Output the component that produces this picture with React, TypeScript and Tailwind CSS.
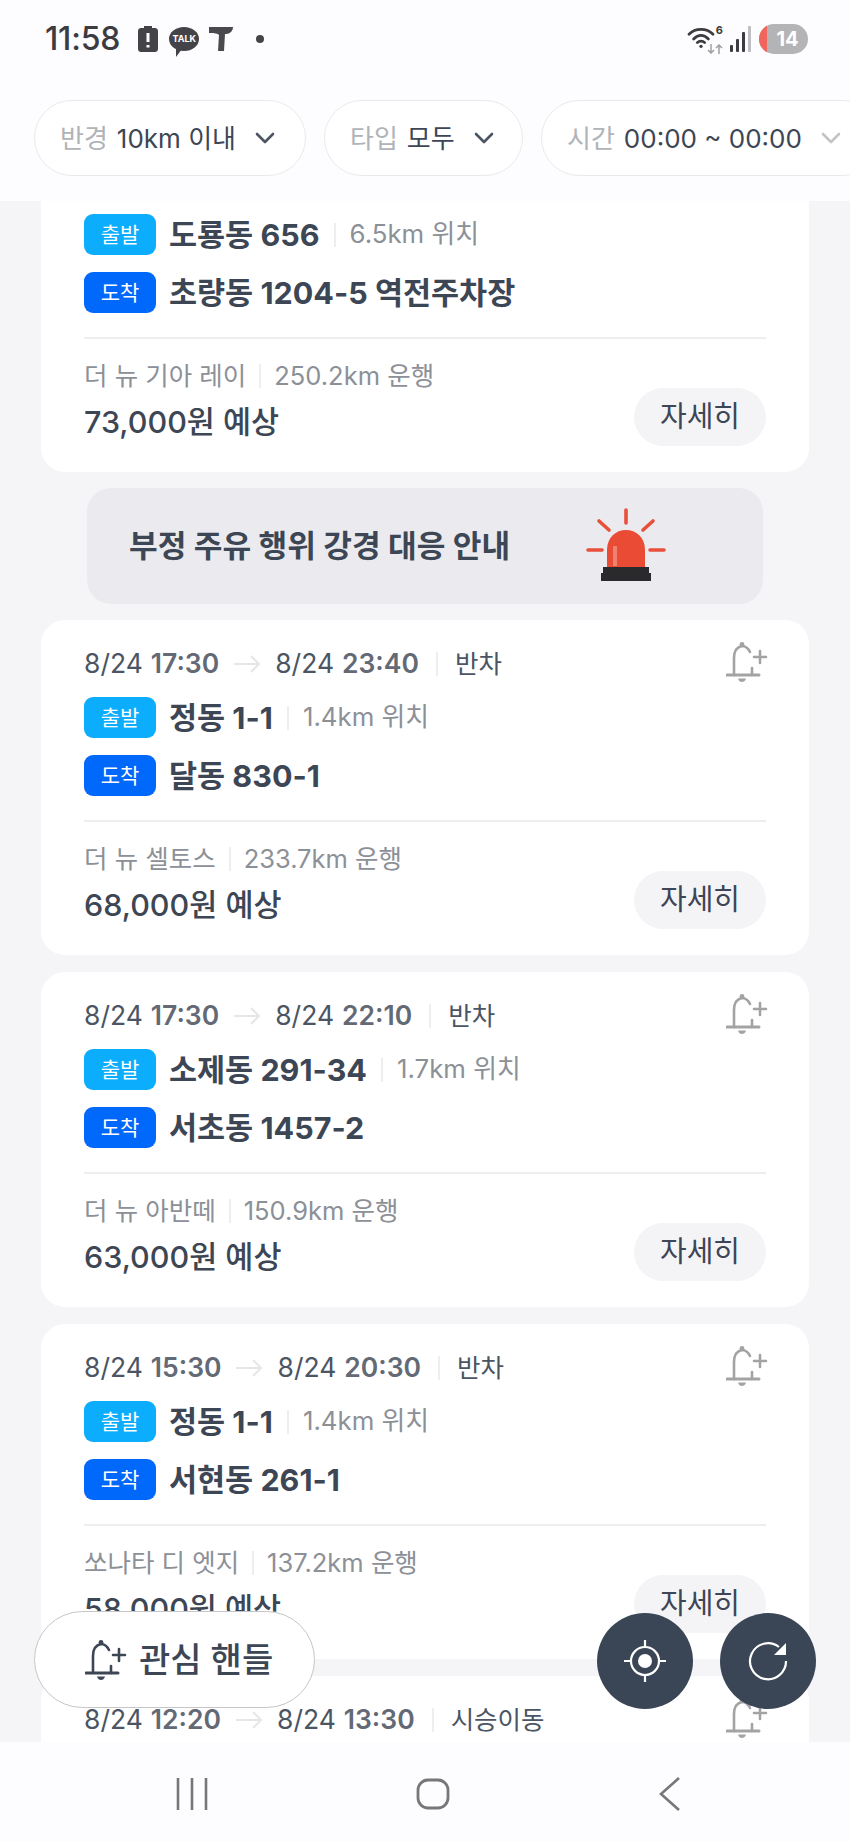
import React from "react";

const FONT = { fontFamily: '"Inter","Noto Sans CJK KR",sans-serif' };

function BellPlus({ color = "#a3a3a6", className = "" }: { color?: string; className?: string }) {
  return (
    <svg viewBox="0 0 42 42" className={className} fill="none" stroke={color} strokeWidth="2.6" strokeLinecap="round">
      <path d="M1 34H33" strokeWidth="3" />
      <path d="M8 34V17C8 10 11 6 16 5C19 5 22 7 24 11" />
      <path d="M26 27V34" />
      <circle cx="16" cy="3.5" r="2.4" fill={color} stroke="none" />
      <path d="M12 37.5H20C19.5 40 17.5 41 16 41C14.5 41 12.5 40 12 37.5Z" fill={color} stroke="none" />
      <path d="M34 10V22M28 16H40" />
    </svg>
  );
}

function Chevron({ className = "", color = "#4b5563" }: { className?: string; color?: string }) {
  return (
    <svg viewBox="0 0 20 14" className={className} fill="none" stroke={color} strokeWidth="2.6" strokeLinecap="round" strokeLinejoin="round">
      <path d="M2 3L10 11L18 3" />
    </svg>
  );
}

function Chip({ label, value, chevron, extra = "" }: { label: string; value: string; chevron?: string; extra?: string }) {
  return (
    <div className={`flex h-[76px] shrink-0 items-center rounded-full border border-[#eaeaec] bg-white pl-[25px] ${extra}`}>
      <span className="text-[26px] text-[#b0b3b8]">{label}</span>
      <span className="ml-[9px] text-[26px] text-[#3d4654]">{value}</span>
      <Chevron className="ml-[19px] h-[14px] w-[20px] shrink-0" color={chevron} />
    </div>
  );
}

function Divider({ className = "" }: { className?: string }) {
  return <span className={`mx-[13px] inline-block h-[24px] w-[2px] bg-[#eeeef0] ${className}`} />;
}

function Badge({ kind }: { kind: "출발" | "도착" }) {
  return (
    <span
      className={`mr-[13px] flex h-[41px] w-[72px] shrink-0 items-center justify-center rounded-[9px] text-[21px] text-white ${
        kind === "출발" ? "bg-[#0cadfd]" : "bg-[#0068fa]"
      }`}
    >
      {kind}
    </span>
  );
}

type CardProps = {
  times?: [string, string, string, string];
  kind?: string;
  from: string;
  fromDist: string;
  to: string;
  car: string;
  dist: string;
  price: string;
  clipped?: boolean;
};

function Card({ times, kind, from, fromDist, to, car, dist, price, clipped }: CardProps) {
  return (
    <section
      className={`relative mx-[41px] shrink-0 bg-white px-[43px] ${
        clipped ? "h-[271px] rounded-b-[24px] pt-[13px]" : "h-[335px] rounded-[24px] pt-[27px]"
      }`}
    >
      {times && (
        <div className="mb-[16px] flex h-[34px] items-center text-[26.5px] text-[#4b5563]">
          <span>{times[0]}</span>
          <span className="ml-[8px] font-semibold text-[#636a75]">{times[1]}</span>
          <svg viewBox="0 0 28 18" className="mx-[14px] h-[18px] w-[28px]" fill="none" stroke="#e6e6e8" strokeWidth="2">
            <path d="M1 9H26M18 1L26 9L18 17" />
          </svg>
          <span>{times[2]}</span>
          <span className="ml-[8px] font-semibold text-[#636a75]">{times[3]}</span>
          <Divider className="mx-[17px]" />
          <span className="text-[25.5px]">{kind}</span>
          <BellPlus className="absolute right-[41px] top-[21px] h-[42px] w-[42px]" />
        </div>
      )}
      <div className="mb-[17px] flex h-[41px] items-center">
        <Badge kind="출발" />
        <span className="text-[30.5px] font-bold text-[#3d4654]">{from}</span>
        <Divider className="mx-[14px]" />
        <span className="text-[25.8px] text-[#8c9097]">{fromDist}</span>
      </div>
      <div className="flex h-[41px] items-center">
        <Badge kind="도착" />
        <span className="text-[30.5px] font-bold text-[#3d4654]">{to}</span>
      </div>
      <div className="mt-[24px] h-[2px] bg-[#eeeef0]" />
      <div className="mt-[20px] flex h-[34px] items-center text-[25.5px] text-[#8c9097]">
        <span>{car}</span>
        <Divider />
        <span>{dist}</span>
      </div>
      <div className="mt-[10px] text-[30.5px] font-medium leading-[38px] text-[#3d4654]">{price}</div>
      <button className="absolute bottom-[26px] right-[43px] flex h-[58px] w-[132px] items-center justify-center rounded-full bg-[#f4f4f7] text-[29px] text-[#3d4654]">
        자세히
      </button>
    </section>
  );
}

function Siren() {
  return (
    <svg viewBox="0 0 80 76" className="h-[76px] w-[80px]">
      <g stroke="#e8503c" strokeWidth="3.6" strokeLinecap="round">
        <path d="M40 2V15M13 13L23 22M67 13L57 22M2 42H16M64 42H78" />
      </g>
      <path d="M21 60V42C21 29 30 22 40 22C50 22 59 29 59 42V60Z" fill="#e94b35" />
      <rect x="27" y="38" width="4" height="20" fill="#f08070" />
      <path d="M17 59H63V65H65V73H15V65H17Z" fill="#2a2a2c" />
    </svg>
  );
}

export default function App() {
  return (
    <div style={FONT} className="relative flex h-[1842px] w-[850px] flex-col overflow-hidden bg-[#f5f5f8]">
      <header className="shrink-0 bg-[#fdfcfe]">
        <div className="flex h-[78px] items-center pl-[45px] pr-[42px]">
          <span className="text-[32px] font-medium tracking-[-0.2px] text-[#3c3c40]">11:58</span>
          <svg viewBox="0 0 20 26" className="ml-[18px] h-[26px] w-[20px]">
            <path d="M6 0H14V2H17C18.5 2 20 3 20 5V23C20 25 18.5 26 17 26H3C1.5 26 0 25 0 23V5C0 3 1.5 2 3 2H6Z" fill="#444448" />
            <path d="M10 7V16M10 19V21.5" stroke="#fff" strokeWidth="3" />
          </svg>
          <span className="relative ml-[11px] flex h-[24px] w-[30px] items-center justify-center rounded-[50%] bg-[#444448] text-[9px] font-bold text-white">
            TALK
            <svg viewBox="0 0 8 8" className="absolute -bottom-[6px] left-[6px] h-[8px] w-[8px]">
              <path d="M1 0L7 0L1 8Z" fill="#444448" />
            </svg>
          </span>
          <svg viewBox="0 0 26 26" className="ml-[9px] h-[26px] w-[26px]">
            <path d="M1 1H25C25 5 22 8 18 8H17L16 25H10L11 9C9 7 4 7 1 7Z" fill="#4a4a4e" />
          </svg>
          <span className="ml-[22px] h-[8px] w-[8px] rounded-full bg-[#444448]" />
          <div className="ml-auto flex items-center">
            <div className="relative h-[28px] w-[36px]">
              <svg viewBox="0 0 30 26" className="absolute left-0 top-[1px] h-[24px] w-[28px]" fill="none" stroke="#3c3c40" strokeWidth="3" strokeLinecap="round">
                <path d="M2 9C9 2 21 2 28 9M7 14C12 9 18 9 23 14M11 18C13 16 17 16 19 18" />
                <circle cx="15" cy="22" r="1.8" fill="#3c3c40" stroke="none" />
              </svg>
              <span className="absolute -top-[3px] right-0 text-[11px] font-bold text-[#3c3c40]">6</span>
              <svg viewBox="0 0 16 10" className="absolute bottom-[-1px] right-0 h-[10px] w-[16px]" fill="none" stroke="#a0a0a4" strokeWidth="1.5">
                <path d="M4 0V9M1 6L4 9L7 6M12 10V1M9 4L12 1L15 4" />
              </svg>
            </div>
            <div className="ml-[7px] flex h-[26px] items-end gap-[3px]">
              <span className="h-[7px] w-[3px] rounded-[1px] bg-[#3c3c40]" />
              <span className="h-[13px] w-[3px] rounded-[1px] bg-[#3c3c40]" />
              <span className="h-[20px] w-[3px] rounded-[1px] bg-[#3c3c40]" />
              <span className="h-[26px] w-[3px] rounded-[1px] bg-[#c0c0c4]" />
            </div>
            <div className="ml-[8px] flex h-[30px] w-[49px] overflow-hidden rounded-full bg-[#b4b4b6]">
              <span className="h-full w-[8px] bg-[#f0655c]" />
              <span className="flex-1 text-center text-[20px] font-bold leading-[30px] text-white">14</span>
            </div>
          </div>
        </div>
        <div className="flex h-[123px] gap-[18px] overflow-hidden pl-[34px] pt-[22px]">
          <Chip label="반경" value="10km 이내" extra="w-[272px]" />
          <Chip label="타입" value="모두" extra="w-[199px]" />
          <Chip label="시간" value="00:00 ~ 00:00" chevron="#c4c4c8" extra="w-[340px]" />
        </div>
      </header>

      <main className="flex min-h-0 flex-1 flex-col gap-[17px] overflow-hidden">
        <Card clipped from="도룡동 656" fromDist="6.5km 위치" to="초량동 1204-5 역전주차장" car="더 뉴 기아 레이" dist="250.2km 운행" price="73,000원 예상" />
        <div className="mx-[87px] -my-px flex h-[116px] shrink-0 items-center rounded-[24px] bg-[#ebebef] pl-[42px]">
          <span className="text-[31.2px] font-bold text-[#3d4654]">부정 주유 행위 강경 대응 안내</span>
          <span className="ml-auto mr-[97px]">
            <Siren />
          </span>
        </div>
        <Card times={["8/24", "17:30", "8/24", "23:40"]} kind="반차" from="정동 1-1" fromDist="1.4km 위치" to="달동 830-1" car="더 뉴 셀토스" dist="233.7km 운행" price="68,000원 예상" />
        <Card times={["8/24", "17:30", "8/24", "22:10"]} kind="반차" from="소제동 291-34" fromDist="1.7km 위치" to="서초동 1457-2" car="더 뉴 아반떼" dist="150.9km 운행" price="63,000원 예상" />
        <Card times={["8/24", "15:30", "8/24", "20:30"]} kind="반차" from="정동 1-1" fromDist="1.4km 위치" to="서현동 261-1" car="쏘나타 디 엣지" dist="137.2km 운행" price="58,000원 예상" />
        <Card times={["8/24", "12:20", "8/24", "13:30"]} kind="시승이동" from="정동 1-1" fromDist="1.4km 위치" to="서현동 261-1" car="쏘나타 디 엣지" dist="137.2km 운행" price="58,000원 예상" />
      </main>

      <nav className="flex h-[100px] shrink-0 items-center justify-between bg-[#fdfcfe] pl-[176px] pr-[168px] pt-[4px]">
        <svg viewBox="0 0 32 32" className="h-[32px] w-[32px]" stroke="#77777b" strokeWidth="2.6">
          <path d="M2 0V32M16 0V32M30 0V32" />
        </svg>
        <svg viewBox="0 0 34 32" className="h-[32px] w-[34px]" fill="none" stroke="#77777b" strokeWidth="2.8">
          <rect x="2" y="2" width="30" height="28" rx="10" />
        </svg>
        <svg viewBox="0 0 24 34" className="h-[34px] w-[24px]" fill="none" stroke="#77777b" strokeWidth="2.6">
          <path d="M21 1L3 17L21 33" />
        </svg>
      </nav>

      <button className="absolute left-[34px] top-[1611px] flex h-[97px] w-[281px] items-center rounded-full border border-[#c6c6c8] bg-white pl-[50px]">
        <BellPlus color="#3d4654" className="h-[42px] w-[42px]" />
        <span className="ml-[12px] text-[34px] font-medium text-[#3d4654]">관심 핸들</span>
      </button>
      <button className="absolute left-[597px] top-[1613px] flex h-[96px] w-[96px] items-center justify-center rounded-full bg-[#3a4656]">
        <svg viewBox="0 0 42 42" className="h-[42px] w-[42px]" fill="none" stroke="#fff" strokeWidth="2.2">
          <circle cx="21" cy="21" r="14" />
          <circle cx="21" cy="21" r="7" fill="#fff" stroke="none" />
          <path d="M21 0V8M21 34V42M0 21H8M34 21H42" />
        </svg>
      </button>
      <button className="absolute left-[720px] top-[1613px] flex h-[96px] w-[96px] items-center justify-center rounded-full bg-[#3a4656]">
        <svg viewBox="0 0 40 40" className="h-[40px] w-[40px]" fill="none" stroke="#fff" strokeWidth="2.2">
          <path d="M31 6A18 18 0 1 0 38 20" />
          <path d="M38 2V14H26Z" fill="#fff" stroke="none" />
        </svg>
      </button>
    </div>
  );
}
